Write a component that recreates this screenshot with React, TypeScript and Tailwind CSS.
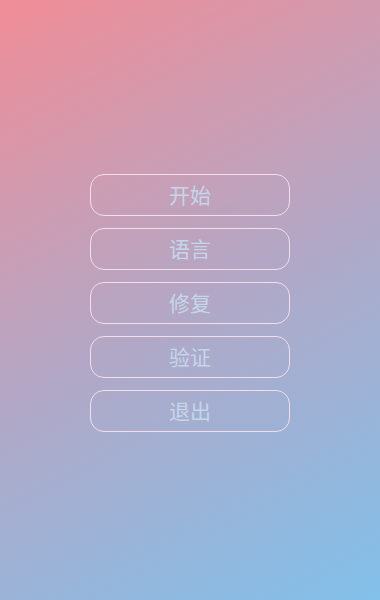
const ITEMS = ["开始", "语言", "修复", "验证", "退出"];

export default function App() {
  return (
    <div className="flex h-[600px] w-full items-center justify-center bg-[linear-gradient(152deg,#f18d97,#b3a7c5_50%,#82c0ea)] pt-[6px] font-['Noto_Sans_CJK_SC',sans-serif]">
      <div className="flex flex-col gap-3">
        {ITEMS.map((label) => (
          <button
            key={label}
            type="button"
            className="flex h-[42px] w-[200px] items-center justify-center rounded-[14px] border-[1.5px] border-[#f4deec] text-[21px] text-[#c6d6ea]"
          >
            {label}
          </button>
        ))}
      </div>
    </div>
  );
}
